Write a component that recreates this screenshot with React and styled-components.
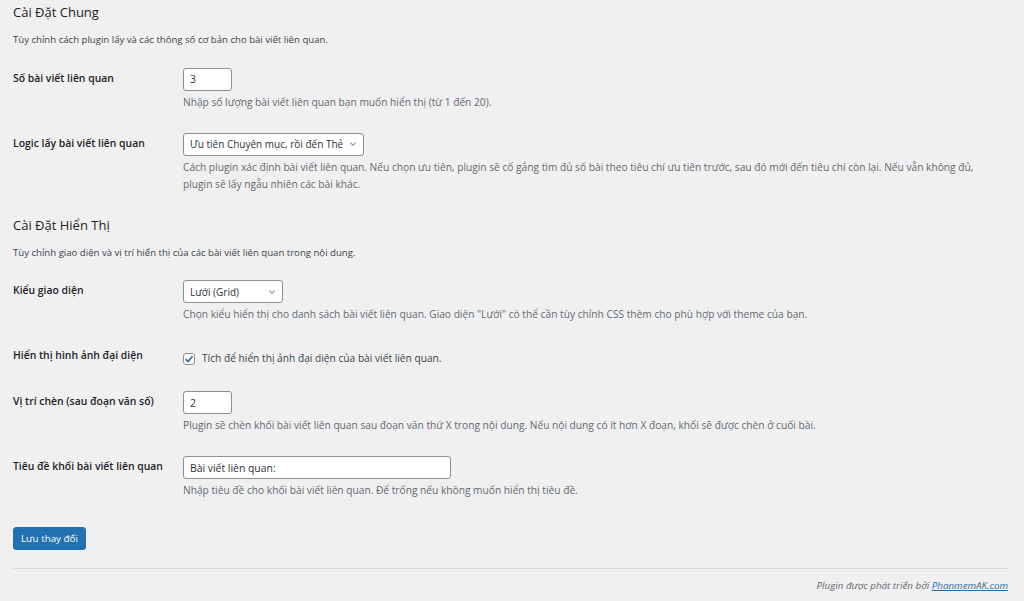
import React, { useState } from 'react';
import styled, { createGlobalStyle } from 'styled-components';

const GlobalStyle = createGlobalStyle`
  html, body {
    margin: 0;
    padding: 0;
    background: #f0f0f1;
  }
  body {
    font-family: "Open Sans", "Noto Sans", sans-serif;
    color: #1d2327;
  }
`;

const Page = styled.div`
  padding: 4px 16px 0 13px;
  min-height: 601px;
  box-sizing: border-box;
`;

const SectionTitle = styled.h2`
  margin: ${(p) => (p.$first ? '0' : '13px')} 0 0;
  font-size: 13px;
  line-height: 17px;
  font-weight: 400;
  color: #1d2327;
`;

const SectionDesc = styled.p`
  margin: 11px 0 0;
  font-size: 9.6px;
  line-height: 15px;
  color: #3c434a;
`;

const FormTable = styled.div`
  margin-top: 9.5px;
`;

const Row = styled.div`
  display: grid;
  grid-template-columns: 170px 1fr;
  padding: 11px 0;
`;

const Label = styled.label`
  padding-top: 2px;
  font-size: 10.4px;
  line-height: 17px;
  font-weight: 600;
  color: #1d2327;
`;

const Field = styled.div`
  display: flex;
  flex-direction: column;
  align-items: flex-start;
  padding-right: 6px;
  min-height: ${(p) => (p.$tall ? '24px' : 'auto')};
`;

const TextInput = styled.input`
  box-sizing: border-box;
  width: ${(p) => p.$w}px;
  height: 23px;
  padding: 0 6px;
  border: 1px solid #8c8f94;
  border-radius: 3px;
  background: #fff;
  font-family: inherit;
  font-size: 10.4px;
  color: #2c3338;
  outline: none;
`;

const SelectBox = styled.div`
  box-sizing: border-box;
  width: ${(p) => p.$w}px;
  height: 23px;
  display: flex;
  align-items: center;
  justify-content: space-between;
  gap: 4px;
  padding: 0 6px;
  border: 1px solid #8c8f94;
  border-radius: 3px;
  background: #fff;
  font-size: 10px;
  color: #2c3338;
  white-space: nowrap;
  overflow: hidden;
`;

const Chevron = () => (
  <svg width="8" height="8" viewBox="0 0 10 10" fill="none">
    <path d="M1.5 3.3 L5 6.7 L8.5 3.3" stroke="#50575e" strokeWidth="1.2" />
  </svg>
);

const Desc = styled.p`
  margin: 3px 0 0;
  font-size: 10.2px;
  line-height: 17px;
  color: #646970;
`;

const CheckLine = styled.label`
  display: flex;
  align-items: center;
  gap: 7px;
  padding-top: 5px;
  font-size: 10.2px;
  line-height: 17px;
  color: #3c434a;
  cursor: pointer;
`;

const CheckBox = styled.span`
  box-sizing: border-box;
  width: 12px;
  height: 12px;
  border: 1px solid #8c8f94;
  border-radius: 3px;
  background: #fff;
  display: flex;
  align-items: center;
  justify-content: center;
`;

const Submit = styled.div`
  margin-top: 14.5px;
`;

const PrimaryButton = styled.button`
  height: 23px;
  padding: 0 7px;
  border: 1px solid #2271b1;
  border-radius: 3px;
  background: #2271b1;
  color: #fff;
  font-family: inherit;
  font-size: 9.8px;
  cursor: pointer;
`;

const Divider = styled.hr`
  margin: 18px 0 0;
  border: 0;
  border-top: 1px solid #dcdcde;
`;

const Footer = styled.p`
  margin: 9px 0 0;
  text-align: right;
  font-size: 9.8px;
  line-height: 15px;
  font-style: italic;
  color: #646970;

  a {
    color: #2271b1;
    text-decoration: underline;
  }
`;

export default function App() {
  const [checked, setChecked] = useState(true);
  return (
    <>
      <GlobalStyle />
      <Page>
        <SectionTitle $first>Cài Đặt Chung</SectionTitle>
        <SectionDesc>Tùy chỉnh cách plugin lấy và các thông số cơ bản cho bài viết liên quan.</SectionDesc>
        <FormTable>
          <Row>
            <Label>Số bài viết liên quan</Label>
            <Field>
              <TextInput $w={49} defaultValue="3" />
              <Desc>Nhập số lượng bài viết liên quan bạn muốn hiển thị (từ 1 đến 20).</Desc>
            </Field>
          </Row>
          <Row>
            <Label>Logic lấy bài viết liên quan</Label>
            <Field>
              <SelectBox $w={181}>
                <span>Ưu tiên Chuyên mục, rồi đến Thẻ</span>
                <Chevron />
              </SelectBox>
              <Desc>
                Cách plugin xác định bài viết liên quan. Nếu chọn ưu tiên, plugin sẽ cố gắng tìm đủ số bài theo tiêu chí ưu tiên trước, sau đó mới đến tiêu chí còn lại. Nếu vẫn không đủ, plugin sẽ lấy ngẫu nhiên các bài khác.
              </Desc>
            </Field>
          </Row>
        </FormTable>

        <SectionTitle>Cài Đặt Hiển Thị</SectionTitle>
        <SectionDesc>Tùy chỉnh giao diện và vị trí hiển thị của các bài viết liên quan trong nội dung.</SectionDesc>
        <FormTable>
          <Row>
            <Label>Kiểu giao diện</Label>
            <Field>
              <SelectBox $w={100}>
                <span>Lưới (Grid)</span>
                <Chevron />
              </SelectBox>
              <Desc>Chọn kiểu hiển thị cho danh sách bài viết liên quan. Giao diện "Lưới" có thể cần tùy chỉnh CSS thêm cho phù hợp với theme của bạn.</Desc>
            </Field>
          </Row>
          <Row>
            <Label>Hiển thị hình ảnh đại diện</Label>
            <Field $tall>
              <CheckLine onClick={() => setChecked(!checked)}>
                <CheckBox>
                  {checked && (
                    <svg width="10" height="10" viewBox="0 0 10 10" fill="none">
                      <path d="M1.6 5.2 L4 7.6 L8.6 2.2" stroke="#2271b1" strokeWidth="1.7" />
                    </svg>
                  )}
                </CheckBox>
                Tích để hiển thị ảnh đại diện của bài viết liên quan.
              </CheckLine>
            </Field>
          </Row>
          <Row>
            <Label>Vị trí chèn (sau đoạn văn số)</Label>
            <Field>
              <TextInput $w={49} defaultValue="2" />
              <Desc>Plugin sẽ chèn khối bài viết liên quan sau đoạn văn thứ X trong nội dung. Nếu nội dung có ít hơn X đoạn, khối sẽ được chèn ở cuối bài.</Desc>
            </Field>
          </Row>
          <Row>
            <Label>Tiêu đề khối bài viết liên quan</Label>
            <Field>
              <TextInput $w={268} defaultValue="Bài viết liên quan:" />
              <Desc>Nhập tiêu đề cho khối bài viết liên quan. Để trống nếu không muốn hiển thị tiêu đề.</Desc>
            </Field>
          </Row>
        </FormTable>

        <Submit>
          <PrimaryButton type="button">Lưu thay đổi</PrimaryButton>
        </Submit>
        <Divider />
        <Footer>
          Plugin được phát triển bởi <a href="#">PhanmemAK.com</a>
        </Footer>
      </Page>
    </>
  );
}
